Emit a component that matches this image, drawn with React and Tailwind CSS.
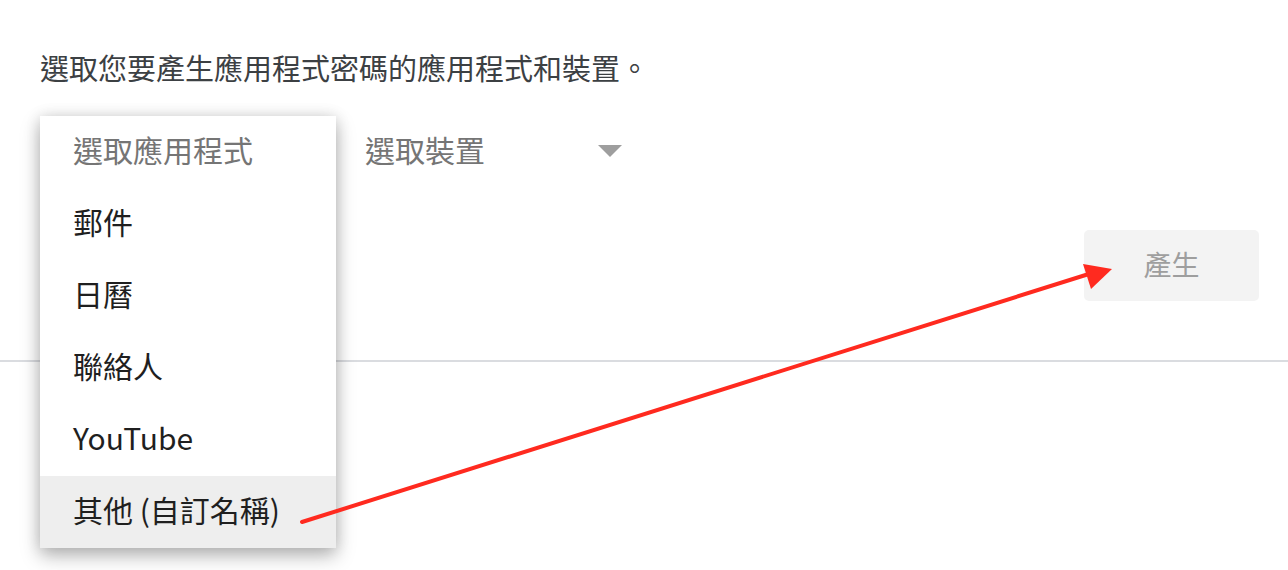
import React from "react";

const items = ["郵件", "日曆", "聯絡人", "YouTube", "其他 (自訂名稱)"];

function AppMenu() {
  return (
    <div className="absolute left-10 top-[116px] w-[296px] bg-white shadow-[0_8px_18px_rgba(0,0,0,0.28),0_0_14px_rgba(0,0,0,0.12)]">
      <div className="h-[72px] pl-[33px] pb-[5px] flex items-center text-[30px] text-[#757575]">選取應用程式</div>
      {items.map((label, i) => (
        <div
          key={label}
          className={`h-[72px] pl-[33px] pb-[5px] flex items-center text-[30px] text-[#1f1f1f] ${
            i === items.length - 1 ? "bg-[#eeeeee]" : ""
          }`}
        >
          {label}
        </div>
      ))}
    </div>
  );
}

function Arrow() {
  return (
    <svg className="absolute inset-0 pointer-events-none" width="1288" height="570">
      <line x1="302" y1="522" x2="1092" y2="273" stroke="#ff2a1f" strokeWidth="4" strokeLinecap="round" />
      <polygon points="1083,264 1112,269 1091,289" fill="#ff2a1f" />
    </svg>
  );
}

export default function App() {
  return (
    <div className="relative w-[1288px] h-[570px] bg-white overflow-hidden font-['Noto_Sans_CJK_TC','Noto_Sans',sans-serif]">
      <div className="px-10 pt-[49px]">
        <p className="text-[29px] leading-[36px] text-[#3c4043]">選取您要產生應用程式密碼的應用程式和裝置。</p>
        <div className="flex items-center h-[72px] mt-[31px] pb-[5px]">
          <div className="w-[296px]" />
          <div className="ml-[29px] w-[257px] flex items-center justify-between">
            <span className="text-[30px] text-[#757575]">選取裝置</span>
            <svg width="24" height="12" viewBox="0 0 24 12" className="mt-[2px]">
              <polygon points="0,0 24,0 12,12" fill="#9e9e9e" />
            </svg>
          </div>
        </div>
      </div>
      <div className="flex justify-end pr-[29px] mt-[42px]">
        <button className="w-[175px] h-[71px] pb-[4px] rounded-[5px] bg-[#f3f3f3] text-[28px] text-[#9e9e9e]">產生</button>
      </div>
      <div className="mt-[59px] h-[2px] bg-[#dadce0]" />
      <AppMenu />
      <Arrow />
    </div>
  );
}
